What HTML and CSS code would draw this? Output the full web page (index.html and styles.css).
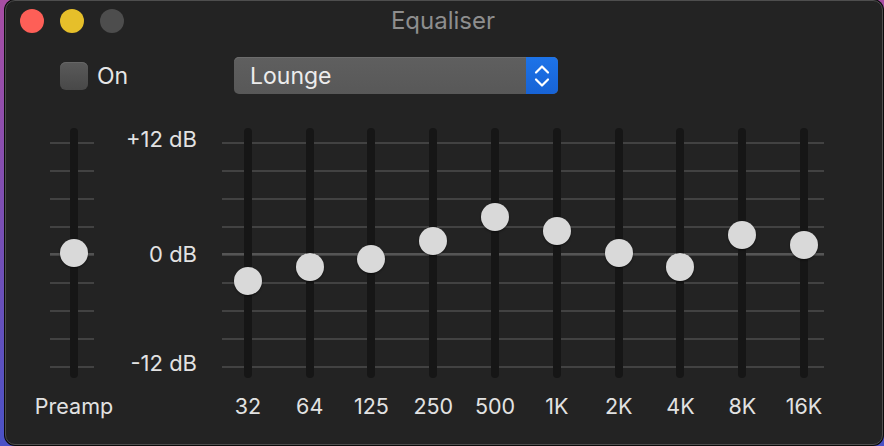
FILE: index.html
```html
<!DOCTYPE html>
<html>
<head>
<meta charset="utf-8">
<link rel="stylesheet" href="styles.css">
</head>
<body>
<div class="window">
  <div class="titlebar">
    <div class="lights">
      <span class="light red"></span>
      <span class="light yellow"></span>
      <span class="light gray"></span>
    </div>
    <div class="title">Equaliser</div>
    <div></div>
  </div>
  <div class="controls">
    <label class="onoff"><span class="checkbox"></span><span>On</span></label>
    <div class="popup">
      <span class="popup-text">Lounge</span>
      <span class="popup-arrows">
        <svg width="18" height="28" viewBox="0 0 18 28"><path d="M3 10.5 L9 4.5 L15 10.5" fill="none" stroke="#fff" stroke-width="2.2" stroke-linecap="round" stroke-linejoin="round"/><path d="M3 17.5 L9 23.5 L15 17.5" fill="none" stroke="#fff" stroke-width="2.2" stroke-linecap="round" stroke-linejoin="round"/></svg>
      </span>
    </div>
  </div>
  <div class="eq">
    <div class="col preamp">
      <div class="slot lines-short"><div class="track"><span class="knob" style="top:111px"></span></div></div>
      <div class="label">Preamp</div>
    </div>
    <div class="dblabels">
      <span class="db top">+12 dB</span>
      <span class="db mid">0 dB</span>
      <span class="db bot">-12 dB</span>
    </div>
    <div class="bands">
      <div class="col band"><div class="slot"><div class="track"><span class="knob" style="top:139px"></span></div></div><div class="label">32</div></div>
      <div class="col band"><div class="slot"><div class="track"><span class="knob" style="top:125px"></span></div></div><div class="label">64</div></div>
      <div class="col band"><div class="slot"><div class="track"><span class="knob" style="top:117px"></span></div></div><div class="label">125</div></div>
      <div class="col band"><div class="slot"><div class="track"><span class="knob" style="top:99px"></span></div></div><div class="label">250</div></div>
      <div class="col band"><div class="slot"><div class="track"><span class="knob" style="top:75px"></span></div></div><div class="label">500</div></div>
      <div class="col band"><div class="slot"><div class="track"><span class="knob" style="top:89px"></span></div></div><div class="label">1K</div></div>
      <div class="col band"><div class="slot"><div class="track"><span class="knob" style="top:111px"></span></div></div><div class="label">2K</div></div>
      <div class="col band"><div class="slot"><div class="track"><span class="knob" style="top:125px"></span></div></div><div class="label">4K</div></div>
      <div class="col band"><div class="slot"><div class="track"><span class="knob" style="top:93px"></span></div></div><div class="label">8K</div></div>
      <div class="col band"><div class="slot"><div class="track"><span class="knob" style="top:103px"></span></div></div><div class="label">16K</div></div>
    </div>
  </div>
</div>
</body>
</html>
```

FILE: styles.css
```css
* { box-sizing: border-box; }
html, body {
  margin: 0;
  height: 446px;
  overflow: hidden;
}
body {
  background: linear-gradient(to bottom, #a84ea4 0%, #7a4fb4 50%, #4a52c6 100%);
  font-family: Inter, "Liberation Sans", "Noto Sans", sans-serif;
  padding-left: 5px;
}
.window {
  width: 878px;
  height: 445px;
  background: #232323;
  border: 1px solid #4e4e4e;
  border-radius: 10px;
  box-shadow: 0 0 0 1px #0a0a0a;
  display: flex;
  flex-direction: column;
  color: #e2e2e2;
}
.titlebar {
  height: 40px;
  display: grid;
  grid-template-columns: 1fr auto 1fr;
  align-items: center;
  padding-left: 14px;
}
.lights {
  display: flex;
  gap: 16px;
}
.light {
  width: 24px;
  height: 24px;
  border-radius: 50%;
  display: block;
}
.red { background: #fe5f57; }
.yellow { background: #e6bf2a; }
.gray { background: #4d4d4d; }
.title {
  font-size: 24px;
  line-height: 28px;
  color: #8e8e8e;
  padding-right: 16px;
}
.controls {
  display: flex;
  align-items: center;
  margin-top: 16px;
  height: 37px;
  padding-left: 54px;
}
.onoff {
  display: flex;
  align-items: center;
  gap: 9px;
  font-size: 23px;
  color: #e6e6e6;
  width: 174px;
}
.checkbox {
  width: 28px;
  height: 28px;
  border-radius: 6px;
  background: linear-gradient(#5a5a5a, #484848);
  box-shadow: inset 0 1px 0 #666;
}
.popup {
  width: 324px;
  height: 37px;
  border-radius: 5px;
  background: linear-gradient(#5f5f5f, #585858);
  box-shadow: inset 0 1px 0 #6c6c6c;
  display: flex;
  align-items: center;
  justify-content: space-between;
  overflow: hidden;
}
.popup-text {
  font-size: 23px;
  color: #ececec;
  padding-left: 16px;
}
.popup-arrows {
  width: 32px;
  height: 37px;
  background: linear-gradient(#1d73e8, #1763d6);
  display: flex;
  align-items: center;
  justify-content: center;
}
.popup-arrows svg { display: block; }
.eq {
  display: flex;
  align-items: flex-start;
  margin-top: 34px;
  padding-left: 44px;
}
.col {
  display: flex;
  flex-direction: column;
  align-items: center;
}
.slot {
  width: 100%;
  height: 250px;
  display: flex;
  justify-content: center;
}
.lines-short {
  background:
    linear-gradient(#525252, #525252) 0 125px / 44px 2px no-repeat,
    repeating-linear-gradient(to bottom, transparent 0 14px, #424242 14px 16px, transparent 16px 28px) 0 0 / 44px 250px no-repeat;
}
.preamp { width: 48px; }
.track {
  position: relative;
  width: 8px;
  height: 250px;
  border-radius: 4px;
  background: #161616;
}
.knob {
  position: absolute;
  left: 50%;
  width: 28px;
  height: 28px;
  margin-left: -14px;
  border-radius: 50%;
  background: #d9d9d9;
  box-shadow: 0 1px 2px rgba(0,0,0,0.5);
}
.label {
  margin-top: 15px;
  font-size: 21.5px;
  line-height: 26px;
  color: #e2e2e2;
  white-space: nowrap;
}
.dblabels {
  width: 100px;
  margin-left: -1px;
  height: 250px;
  display: flex;
  flex-direction: column;
  align-items: flex-end;
  font-size: 22px;
  color: #e2e2e2;
}
.db {
  line-height: 26px;
  height: 26px;
}
.db.top { margin-top: -2px; }
.db.mid { margin-top: 89px; }
.db.bot { margin-top: 83px; }
.bands {
  display: flex;
  margin-left: 20px;
  background:
    linear-gradient(#555, #555) 5px 125px / 602px 2px no-repeat,
    repeating-linear-gradient(to bottom, transparent 0 14px, #424242 14px 16px, transparent 16px 28px) 5px 0 / 602px 250px no-repeat;
}
.band { width: 61.8px; }
```
